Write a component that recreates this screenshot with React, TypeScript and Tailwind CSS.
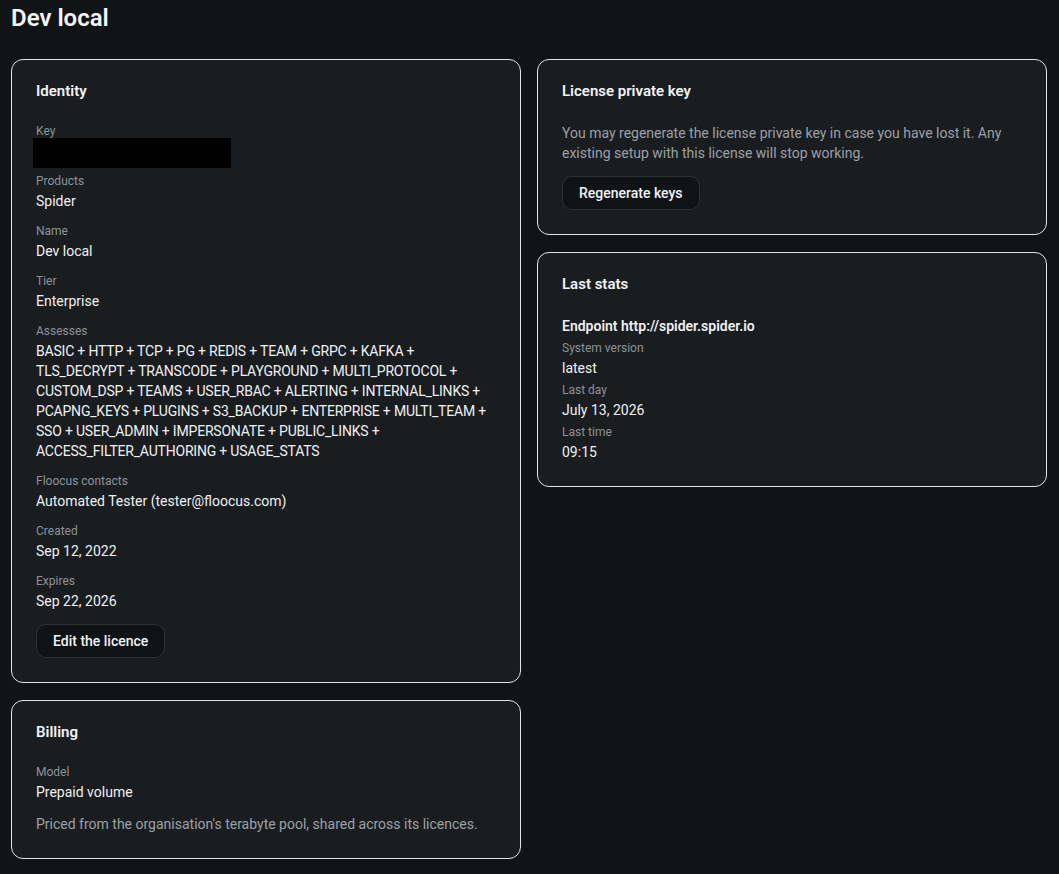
import React from "react";

const font = { fontFamily: "Roboto, 'Noto Sans', sans-serif" };

function Card({ title, children }: { title: string; children: React.ReactNode }) {
  return (
    <div className="rounded-[12px] border border-[#e2e4e6] bg-[#1a1d20] px-[24px] pt-[21px] pb-[24px]">
      <h2 className="text-[15px] leading-[20px] font-semibold text-[#f1f3f5] mb-[22px]">{title}</h2>
      {children}
    </div>
  );
}

function Label({ children }: { children: React.ReactNode }) {
  return <div className="text-[12px] leading-[16px] text-[#8c9298]">{children}</div>;
}

function Value({ children, tight }: { children: React.ReactNode; tight?: boolean }) {
  return (
    <div className={tight ? "mt-[2px] text-[14px] leading-[20px] text-[#eef0f2] tracking-[-0.2px]" : "mt-[2px] text-[14px] leading-[20px] text-[#eef0f2]"}>
      {children}
    </div>
  );
}

function Field({ label, value, last, tight }: { label: string; value: React.ReactNode; last?: boolean; tight?: boolean }) {
  return (
    <div className={last ? "" : "mb-[12px]"}>
      <Label>{label}</Label>
      <Value tight={tight}>{value}</Value>
    </div>
  );
}

function Button({ children }: { children: React.ReactNode }) {
  return (
    <button className="h-[34px] px-[16px] rounded-[10px] border border-[#2c3136] bg-[#101315] text-[14px] font-medium text-[#f1f3f5]">
      {children}
    </button>
  );
}

export default function App() {
  return (
    <div style={font} className="min-h-[874px] bg-[#111416] pl-[11px] pr-[12px] pt-[4px] pb-[14px]">
      <h1 className="text-[24px] leading-[28px] font-semibold text-[#f4f5f6] mb-[27px]">Dev local</h1>
      <div className="grid grid-cols-2 gap-x-[16px] items-start">
        <div className="flex flex-col gap-[17px]">
          <Card title="Identity">
            <div>
              <Label>Key</Label>
              <div className="-ml-[3px] -mt-[1px] w-[198px] h-[30px] bg-black" />
            </div>
            <div className="mt-[5px]">
              <Field label="Products" value="Spider" />
              <Field label="Name" value="Dev local" />
              <Field label="Tier" value="Enterprise" />
              <Field
                label="Assesses"
                tight
                value="BASIC + HTTP + TCP + PG + REDIS + TEAM + GRPC + KAFKA + TLS_DECRYPT + TRANSCODE + PLAYGROUND + MULTI_PROTOCOL + CUSTOM_DSP + TEAMS + USER_RBAC + ALERTING + INTERNAL_LINKS + PCAPNG_KEYS + PLUGINS + S3_BACKUP + ENTERPRISE + MULTI_TEAM + SSO + USER_ADMIN + IMPERSONATE + PUBLIC_LINKS + ACCESS_FILTER_AUTHORING + USAGE_STATS"
              />
              <Field label="Floocus contacts" value="Automated Tester (tester@floocus.com)" />
              <Field label="Created" value="Sep 12, 2022" />
              <Field label="Expires" value="Sep 22, 2026" last />
            </div>
            <div className="mt-[13px]">
              <Button>Edit the licence</Button>
            </div>
          </Card>
          <Card title="Billing">
            <Field label="Model" value="Prepaid volume" last />
            <p className="mt-[12px] text-[14px] leading-[20px] text-[#9aa0a6]">
              Priced from the organisation's terabyte pool, shared across its licences.
            </p>
          </Card>
        </div>
        <div className="flex flex-col gap-[17px]">
          <Card title="License private key">
            <p className="text-[14px] leading-[20px] text-[#9aa0a6]">
              You may regenerate the license private key in case you have lost it. Any existing setup with this license will stop working.
            </p>
            <div className="mt-[13px]">
              <Button>Regenerate keys</Button>
            </div>
          </Card>
          <Card title="Last stats">
            <div className="text-[14px] leading-[20px] font-semibold text-[#eef0f2]">Endpoint http://spider.spider.io</div>
            <div className="mt-[4px] flex flex-col gap-[4px]">
              <div>
                <Label>System version</Label>
                <Value>latest</Value>
              </div>
              <div>
                <Label>Last day</Label>
                <Value>July 13, 2026</Value>
              </div>
              <div>
                <Label>Last time</Label>
                <Value>09:15</Value>
              </div>
            </div>
          </Card>
        </div>
      </div>
    </div>
  );
}
